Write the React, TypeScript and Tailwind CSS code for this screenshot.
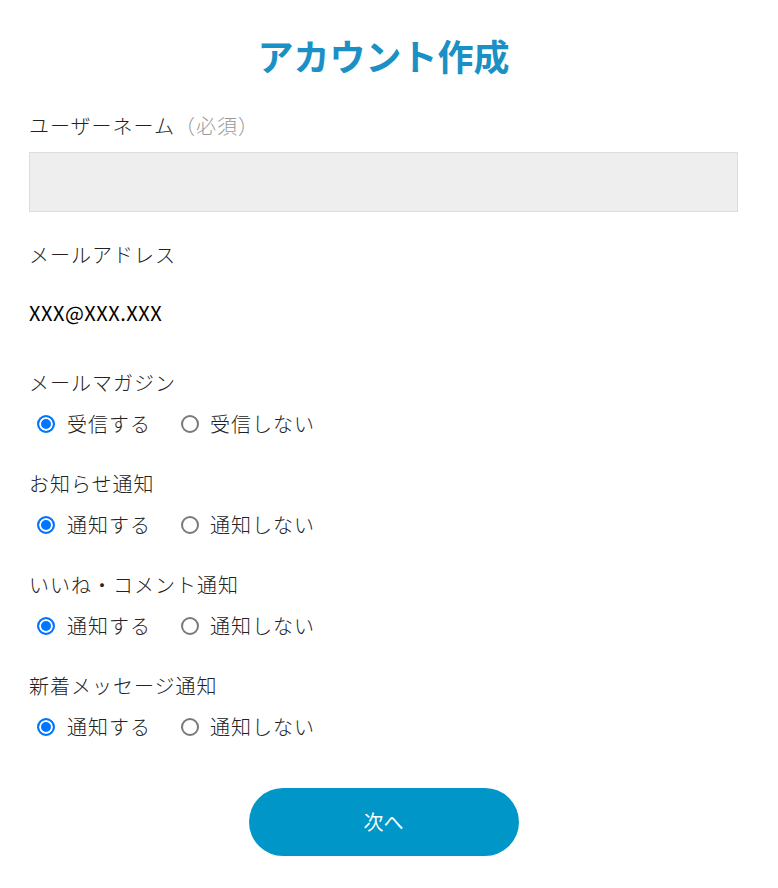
import React, { useState } from 'react';

const font = { fontFamily: '"Noto Sans CJK JP", "Noto Sans", sans-serif' };

interface Group {
  id: string;
  label: string;
  yes: string;
  no: string;
}

const groups: Group[] = [
  { id: 'magazine', label: 'メールマガジン', yes: '受信する', no: '受信しない' },
  { id: 'notice', label: 'お知らせ通知', yes: '通知する', no: '通知しない' },
  { id: 'like', label: 'いいね・コメント通知', yes: '通知する', no: '通知しない' },
  { id: 'message', label: '新着メッセージ通知', yes: '通知する', no: '通知しない' },
];

const radioCls =
  'appearance-none shrink-0 w-[18px] h-[18px] m-0 rounded-full border-2 border-[#7a7a7a] bg-white checked:border-[#0075ff] checked:bg-[#0075ff] checked:shadow-[inset_0_0_0_2px_white] cursor-pointer';

const RadioRow: React.FC<{ group: Group; value: string; onChange: (v: string) => void }> = ({ group, value, onChange }) => (
  <div className="flex items-center mt-[11px] h-[30px]">
    <label className="flex items-center cursor-pointer">
      <input
        type="radio"
        name={group.id}
        checked={value === 'yes'}
        onChange={() => onChange('yes')}
        className={`${radioCls} ml-[8px] mr-[12px]`}
      />
      <span>{group.yes}</span>
    </label>
    <label className="flex items-center cursor-pointer ml-[30px]">
      <input
        type="radio"
        name={group.id}
        checked={value === 'no'}
        onChange={() => onChange('no')}
        className={`${radioCls} mr-[11px]`}
      />
      <span>{group.no}</span>
    </label>
  </div>
);

export default function App() {
  const [values, setValues] = useState<Record<string, string>>({
    magazine: 'yes',
    notice: 'yes',
    like: 'yes',
    message: 'yes',
  });

  return (
    <div
      className="w-[778px] min-h-[888px] bg-white pl-[29px] pr-[40px] text-[20px] leading-[30px] text-[#222] font-light tracking-[1px]"
      style={font}
    >
      <h1 className="pt-[28px] text-center text-[36px] leading-[54px] font-bold text-[#1a90c4] tracking-normal">
        アカウント作成
      </h1>

      <div className="mt-[29px]">
        ユーザーネーム<span className="text-[#999]">（必須）</span>
      </div>
      <input
        type="text"
        className="mt-[11px] block w-full h-[60px] bg-[#eeeeee] border border-[#dddddd] outline-none px-3"
      />

      <div className="mt-[28px]">メールアドレス</div>
      <div className="mt-[28px] text-black font-normal tracking-[0.5px]">XXX@XXX.XXX</div>

      <div className="mt-[40px]">
        {groups.map((g, i) => (
          <div key={g.id} className={i === 0 ? '' : 'mt-[30px]'}>
            <div>{g.label}</div>
            <RadioRow
              group={g}
              value={values[g.id]}
              onChange={(v) => setValues({ ...values, [g.id]: v })}
            />
          </div>
        ))}
      </div>

      <div className="flex justify-center mt-[46px]">
        <button className="w-[270px] h-[68px] rounded-full bg-[#0096c7] text-white text-[20px] font-normal tracking-normal">
          次へ
        </button>
      </div>
    </div>
  );
}
